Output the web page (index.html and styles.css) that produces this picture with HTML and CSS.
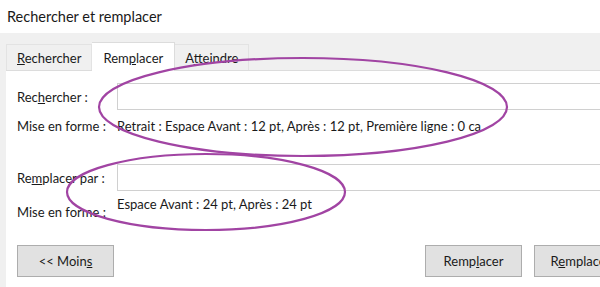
FILE: index.html
```html
<!DOCTYPE html>
<html lang="fr">
<head>
    <meta charset="UTF-8">
    <title>Rechercher et remplacer</title>
    <link rel="stylesheet" href="styles.css">
</head>
<body>
    <div class="dialog">
        <div class="title">Rechercher et remplacer</div>
        <div class="body">
            <div class="tabs">
                <div class="tab"><u>R</u>echercher</div>
                <div class="tab active">Rem<u>p</u>lacer</div>
                <div class="tab">A<u>t</u>teindre</div>
            </div>
            <div class="panel">
                <div class="row">
                    <span class="label">Rec<u>h</u>ercher :</span>
                    <div class="field"></div>
                </div>
                <div class="format">
                    <span class="label">Mise en forme :</span>
                    <span class="value">Retrait : Espace Avant : 12 pt, Après : 12 pt, Première ligne : 0 ca</span>
                </div>
                <div class="row row-replace">
                    <span class="label">Re<u>m</u>placer par :</span>
                    <div class="field"></div>
                </div>
                <div class="format format-replace">
                    <span class="label">Mise en forme :</span>
                    <span class="value">Espace Avant : 24 pt, Après : 24 pt</span>
                </div>
                <div class="buttons">
                    <button class="btn">&lt;&lt; Moin<u>s</u></button>
                    <div class="spacer"></div>
                    <button class="btn">Remp<u>l</u>acer</button>
                    <button class="btn">R<u>e</u>mplacer tout</button>
                </div>
            </div>
        </div>
    </div>

    <!-- annotations drawn over the dialog -->
    <svg class="marks" width="600" height="287" viewBox="0 0 600 287">
        <ellipse cx="303" cy="107" rx="204" ry="49" />
        <ellipse cx="206" cy="192" rx="139" ry="38" />
    </svg>
</body>
</html>
```

FILE: styles.css
```css
body {
    margin: 0;
    width: 600px;
    height: 287px;
    overflow: hidden;
    position: relative;
    font-family: Lato, "Open Sans", sans-serif;
    font-size: 13px;
    color: #1a1a1a;
    background-color: #ffffff;
}

.dialog {
    width: 720px;
}

.title {
    height: 33px;
    padding-left: 7px;
    line-height: 34px;
    font-size: 14.5px;
    background-color: #ffffff;
}

.body {
    background-color: #f0f0f0;
    padding-left: 6px;
    padding-top: 11px;
}

.tabs {
    display: flex;
    align-items: flex-end;
    height: 26px;
}

.tab {
    height: 25px;
    line-height: 27px;
    padding: 0 10px;
    border: 1px solid #e3e3e3;
    border-bottom: none;
    background-color: #f0f0f0;
}

.tab + .tab {
    border-left: none;
}

.tab.active {
    height: 28px;
    line-height: 30px;
    padding: 0 11px;
    margin-bottom: -1px;
    background-color: #ffffff;
    border-color: #dcdcdc;
}

.panel {
    background-color: #ffffff;
    border-top: 1px solid #dcdcdc;
    height: 230px;
    padding-left: 11px;
}

.label {
    display: inline-block;
    width: 100px;
    flex: none;
}

.row {
    display: flex;
    align-items: center;
    padding-top: 12px;
}

.row-replace {
    padding-top: 29px;
}

.field {
    flex: 1;
    height: 25px;
    border: 1px solid #d0d0d0;
    background-color: #ffffff;
}

.format {
    display: flex;
    padding-top: 8px;
    line-height: 17px;
}

.format-replace {
    padding-top: 5px;
}

.format-replace .label {
    margin-top: 8px;
}

.buttons {
    display: flex;
    gap: 12px;
    padding-top: 24px;
}

.spacer {
    width: 287px;
}

.btn {
    width: 97px;
    height: 32px;
    padding: 0;
    font-family: inherit;
    font-size: 13px;
    color: #1a1a1a;
    background-color: #e1e1e1;
    border: 1px solid #adadad;
    border-radius: 0;
    flex: none;
}

.btn:last-child {
    width: 120px;
}

.marks {
    position: absolute;
    left: 0;
    top: 0;
    pointer-events: none;
}

.marks ellipse {
    fill: none;
    stroke: #a144a3;
    stroke-width: 2.2;
}
```
